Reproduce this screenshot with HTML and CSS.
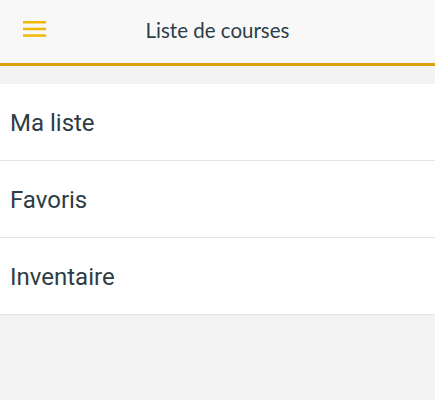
FILE: index.html
```html
<!DOCTYPE html>
<html lang="fr">
<head>
<meta charset="utf-8">
<link rel="stylesheet" href="styles.css">
</head>
<body>
<header class="topbar">
  <button class="menu" aria-label="Menu">
    <svg width="24" height="17" viewBox="0 0 24 17">
      <rect x="0" y="0" width="23" height="2.5" fill="#f2b705"/>
      <rect x="0" y="6.7" width="23" height="2.5" fill="#f2b705"/>
      <rect x="0" y="13.3" width="23" height="2.5" fill="#f2b705"/>
    </svg>
  </button>
  <h1 class="title">Liste de courses</h1>
</header>
<ul class="list">
  <li class="item">Ma liste</li>
  <li class="item">Favoris</li>
  <li class="item">Inventaire</li>
</ul>
</body>
</html>
```
FILE: styles.css
```css
html, body {
  margin: 0;
  padding: 0;
  background: #f3f3f3;
  height: 100%;
}
.topbar {
  position: relative;
  height: 63px;
  background: #f8f8f8;
  border-bottom: 3px solid #d8a20c;
  display: flex;
  align-items: center;
  justify-content: center;
}
.menu {
  position: absolute;
  left: 23px;
  top: 21px;
  padding: 0;
  border: 0;
  background: none;
  display: block;
  line-height: 0;
}
.title {
  margin: 0;
  font-family: Lato, "Open Sans", sans-serif;
  font-weight: 400;
  font-size: 20.5px;
  color: #2c3e48;
  margin-top: -3px;
}
.list {
  list-style: none;
  margin: 18px 0 0;
  padding: 0;
  background: #fff;
}
.item {
  box-sizing: border-box;
  height: 77px;
  padding-top: 2px;
  border-bottom: 1px solid #e4e4e4;
  display: flex;
  align-items: center;
  padding-left: 10px;
  font-family: Roboto, sans-serif;
  font-size: 24px;
  color: #2e3d45;
}
```
